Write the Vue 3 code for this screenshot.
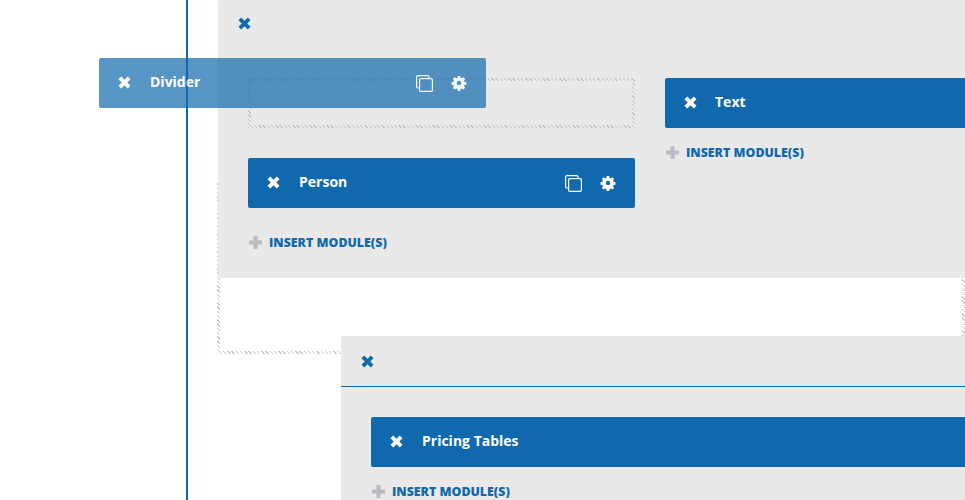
<script setup>
const leftModules = ["Person"]
const icons = {
  close: "M4 .6 8 4.600 12 .6 15.400 4 11.400 8 15.400 12 12 15.400 8 11.400 4 15.400 .6 12 4.600 8 .6 4z",
  gear: "M6.6 0h2.8l.4 2.2 1.3.5L13 1.5l2 2-1.2 1.9.5 1.2 2.2.5v2.8l-2.2.5-.5 1.2 1.2 1.9-2 2-1.9-1.2-1.3.5-.4 2.2H6.6l-.4-2.2-1.3-.5L3 15.500l-2-2 1.200-1.900-.5-1.200L-.5 9.900V7.100l2.200-.5.5-1.200L1 3.500l2-2 1.900 1.200 1.300-.5z",
}
</script>

<template>
  <div class="stage">
    <div class="guide"></div>

    <div class="column">
      <!-- first row, two columns -->
      <section class="row first">
        <header class="row-head">
          <svg class="x x-blue" viewBox="0 0 16 16"><path :d="icons.close" /></svg>
        </header>
        <div class="row-body two">
          <div class="col">
            <div class="drop-slot"></div>
            <div v-for="name in leftModules" :key="name" class="module">
              <svg class="x" viewBox="0 0 16 16"><path :d="icons.close" /></svg>
              <span class="label">{{ name }}</span>
              <svg class="copy" viewBox="0 0 17 17">
                <path d="M3 13H2a1.400 1.400 0 0 1-1.400-1.400V2A1.400 1.400 0 0 1 2 .6h9.600A1.400 1.400 0 0 1 13 2v1.500" />
                <rect x="3.600" y="3.600" width="12.800" height="12.800" rx="1.200" />
              </svg>
              <svg class="gear" viewBox="0 0 16 16">
                <path fill-rule="evenodd" :d="icons.gear + 'M8 5.500a2.500 2.500 0 1 0 0 5 2.500 2.500 0 0 0 0-5z'" />
              </svg>
            </div>
            <div class="insert insert-left">
              <svg class="plus" viewBox="0 0 13 13"><path d="M4.500 0h4v4.500H13v4H8.500V13h-4V8.500H0v-4h4.500z" /></svg>
              <span>INSERT MODULE(S)</span>
            </div>
          </div>
          <div class="col right">
            <div class="module">
              <svg class="x" viewBox="0 0 16 16"><path :d="icons.close" /></svg>
              <span class="label">Text</span>
            </div>
            <div class="insert">
              <svg class="plus" viewBox="0 0 13 13"><path d="M4.500 0h4v4.500H13v4H8.500V13h-4V8.500H0v-4h4.500z" /></svg>
              <span>INSERT MODULE(S)</span>
            </div>
          </div>
        </div>
      </section>

      <div class="row-drop"></div>

      <!-- nested row -->
      <section class="row nested">
        <header class="row-head lined">
          <svg class="x x-blue" viewBox="0 0 16 16"><path :d="icons.close" /></svg>
        </header>
        <div class="row-body">
          <div class="col wide">
            <div class="module">
              <svg class="x" viewBox="0 0 16 16"><path :d="icons.close" /></svg>
              <span class="label">Pricing Tables</span>
            </div>
            <div class="insert">
              <svg class="plus" viewBox="0 0 13 13"><path d="M4.500 0h4v4.500H13v4H8.500V13h-4V8.500H0v-4h4.500z" /></svg>
              <span>INSERT MODULE(S)</span>
            </div>
          </div>
        </div>
      </section>
    </div>

    <!-- module being dragged -->
    <div class="module dragging">
      <svg class="x" viewBox="0 0 16 16"><path :d="icons.close" /></svg>
      <span class="label">Divider</span>
      <svg class="copy" viewBox="0 0 17 17">
        <path d="M3 13H2a1.400 1.400 0 0 1-1.400-1.400V2A1.400 1.400 0 0 1 2 .6h9.600A1.400 1.400 0 0 1 13 2v1.500" />
        <rect x="3.600" y="3.600" width="12.800" height="12.800" rx="1.200" />
      </svg>
      <svg class="gear" viewBox="0 0 16 16">
        <path fill-rule="evenodd" :d="icons.gear + 'M8 5.500a2.500 2.500 0 1 0 0 5 2.500 2.500 0 0 0 0-5z'" />
      </svg>
    </div>
  </div>
</template>

<style scoped>
.stage {
  position: relative;
  display: flex;
  width: 965px;
  height: 500px;
  overflow: hidden;
  background: #fff;
  font-family: "Open Sans", "Liberation Sans", sans-serif;
}

.guide {
  flex: none;
  width: 2px;
  margin-left: 186px;
  background: #1069ac;
}

.column {
  flex: none;
  width: 747px;
  padding-left: 30px;
}

.row {
  position: relative;
  z-index: 1;
  background: #e9e9e9;
  border-radius: 3px;
}

.first {
  width: 800px;
  height: 278px;
}

.nested {
  width: 700px;
  margin-left: 123px;
  margin-top: -18px;
  padding-bottom: 40px;
}

.row-head {
  display: flex;
  align-items: center;
  height: 48px;
  padding-left: 20px;
  box-sizing: border-box;
  border-bottom: 1px solid transparent;
}

.lined {
  height: 51px;
  border-bottom-color: #1069ac;
}

.row-body {
  padding: 30px;
}

.two {
  display: flex;
  gap: 30px;
}

.col {
  flex: none;
  width: 387px;
}

.wide {
  width: 640px;
}

.drop-slot {
  box-sizing: border-box;
  height: 50px;
  margin-bottom: 30px;
  border: 3px solid;
  border-image: repeating-linear-gradient(45deg, #c6c6c6 0 1px, transparent 1px 3px) 3;
}

.row-drop {
  box-sizing: border-box;
  width: 748px;
  height: 173px;
  margin-top: -97px;
  margin-left: -1px;
  border: 3px solid;
  border-image: repeating-linear-gradient(45deg, #c6c6c6 0 1px, transparent 1px 3px) 3;
}

.module {
  display: flex;
  align-items: center;
  height: 50px;
  padding: 0 20px 0 19px;
  background: #1069ac;
  border-radius: 2px;
  color: #fff;
}

.module .x {
  margin-bottom: 2px;
}

.dragging {
  position: absolute;
  z-index: 2;
  left: 99px;
  top: 58px;
  width: 387px;
  box-sizing: border-box;
  opacity: 0.7;
}

.x {
  flex: none;
  width: 13px;
  height: 13px;
  fill: #fff;
}

.x-blue {
  fill: #1069ac;
}

.label {
  flex: 1;
  margin-left: 19px;
  padding-bottom: 4px;
  font-size: 14px;
  font-weight: 700;
}

.right .label {
  margin-left: 18px;
}

.copy {
  flex: none;
  width: 17px;
  height: 17px;
  margin-top: 1px;
  fill: none;
  stroke: #fff;
  stroke-width: 1.200;
}

.gear {
  flex: none;
  width: 14px;
  height: 14px;
  margin-left: 19px;
  fill: #fff;
  overflow: visible;
}

.insert {
  display: flex;
  align-items: center;
  gap: 7px;
  margin-top: 16px;
  padding-left: 1px;
  color: #1069ac;
  font-size: 12.4px;
  font-weight: 800;
}

.insert-left {
  margin-top: 26px;
}

.plus {
  flex: none;
  width: 13px;
  height: 13px;
  fill: #b9bcc0;
}
</style>
